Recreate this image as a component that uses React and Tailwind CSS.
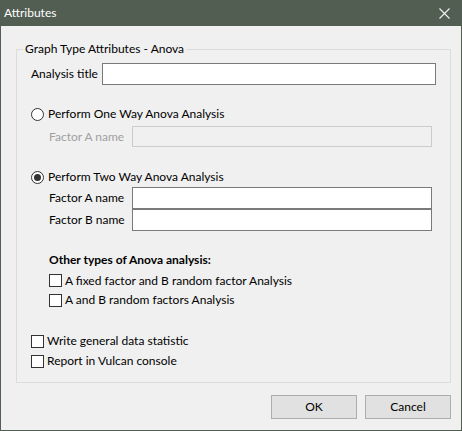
function Radio({ checked }) {
  return (
    <span className="flex h-[13px] w-[13px] shrink-0 items-center justify-center rounded-full border border-[#333333] bg-white">
      {checked && <span className="h-[7px] w-[7px] rounded-full bg-[#333333]" />}
    </span>
  );
}

function Check() {
  return <span className="h-[13px] w-[13px] shrink-0 border border-[#333333] bg-white" />;
}

function Field({ label, disabled, h = 'h-[22px]' }) {
  return (
    <div className={`flex ${h} items-center pl-[18px] pr-[4px]`}>
      <span className={`w-[83px] shrink-0 ${disabled ? 'text-[#a0a0a0]' : 'text-black'}`}>{label}</span>
      <div
        className={`h-full flex-1 border ${disabled ? 'border-[#cccccc] bg-[#f0f0f0]' : 'border-[#7a7a7a] bg-white'}`}
      />
    </div>
  );
}

export default function App() {
  return (
    <div
      className="flex h-[431px] w-[462px] flex-col bg-[#535e53] px-px pb-px text-[12px] text-black"
      style={{ fontFamily: 'Lato, "Noto Sans", sans-serif' }}
    >
      <div className="flex h-[26px] shrink-0 items-center justify-between pl-[3px] pr-[11px] text-white">
        <span>Attributes</span>
        <svg width="11" height="11" viewBox="0 0 11 11" stroke="#f2f2f2" strokeWidth="1.1">
          <path d="M0.5 0.5 L10.5 10.5 M10.5 0.5 L0.5 10.5" />
        </svg>
      </div>

      <div className="flex flex-1 flex-col bg-[#f0f0f0]">
        <div className="relative ml-[15px] mt-[23px] h-[334px] w-[435px] border border-[#dcdcdc]">
          <span className="absolute -top-[10px] left-[6px] bg-[#f0f0f0] px-[2px] leading-[18px]">
            Graph Type Attributes - Anova
          </span>

          <div className="flex flex-col pl-[14px] pr-[14px]">
            <div className="mt-[13px] flex h-[22px] items-center">
              <span className="w-[71px] shrink-0">Analysis title</span>
              <div className="h-full flex-1 border border-[#7a7a7a] bg-white" />
            </div>

            <div className="mt-[19px] flex h-[20px] items-center gap-[4px]">
              <Radio />
              <span>Perform One Way Anova Analysis</span>
            </div>
            <div className="mt-[2px]">
              <Field label="Factor A name" disabled h="h-[21px]" />
            </div>

            <div className="mt-[20px] flex h-[20px] items-center gap-[4px]">
              <Radio checked />
              <span>Perform Two Way Anova Analysis</span>
            </div>
            <Field label="Factor A name" />
            <Field label="Factor B name" />

            <div className="mt-[19px] flex h-[20px] items-center pl-[18px] font-bold">
              Other types of Anova analysis:
            </div>
            <div className="mt-[1px] flex h-[19px] items-center gap-[3px] pl-[18px]">
              <Check />
              <span>A fixed factor and B random factor Analysis</span>
            </div>
            <div className="flex h-[20px] items-center gap-[3px] pl-[18px]">
              <Check />
              <span>A and B random factors Analysis</span>
            </div>

            <div className="mt-[21px] flex h-[20px] items-center gap-[3px]">
              <Check />
              <span>Write general data statistic</span>
            </div>
            <div className="flex h-[20px] items-center gap-[3px]">
              <Check />
              <span>Report in Vulcan console</span>
            </div>
          </div>
        </div>

        <div className="mt-[12px] flex justify-end gap-[8px] pr-[10px]">
          <button className="h-[24px] w-[86px] border border-[#adadad] bg-[#e1e1e1]">OK</button>
          <button className="h-[24px] w-[86px] border border-[#adadad] bg-[#e1e1e1]">Cancel</button>
        </div>
      </div>
    </div>
  );
}
